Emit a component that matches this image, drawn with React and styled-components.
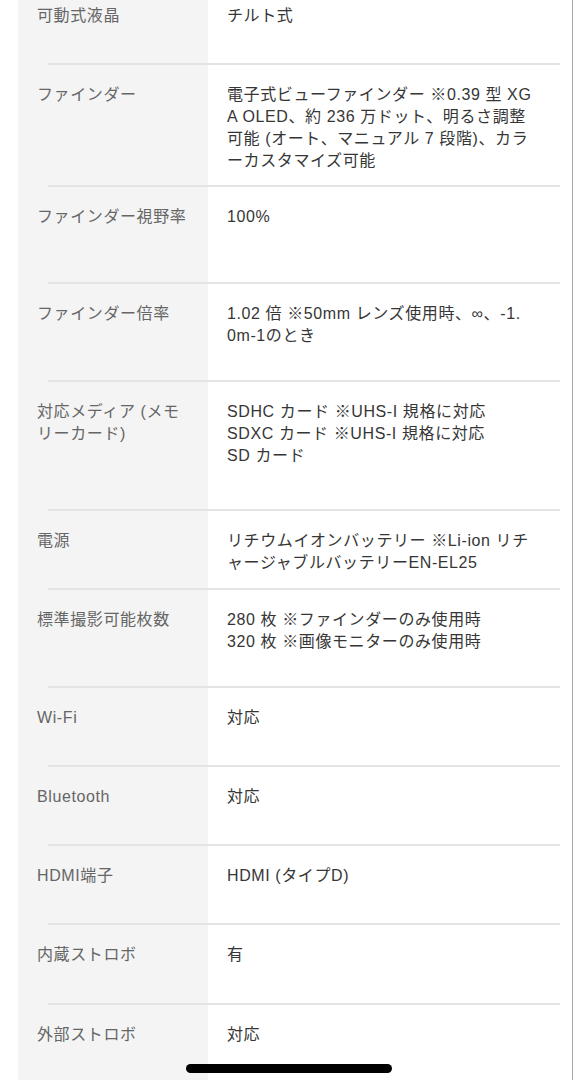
import React from 'react';
import styled, { createGlobalStyle } from 'styled-components';

const GRAY_COL = '#f4f4f4';
const DIVIDER = '#e4e4e4';

const GlobalStyle = createGlobalStyle`
	html, body {
		margin: 0;
		padding: 0;
		background: #fff;
		overflow: hidden;
	}
	body {
		font-family: 'Liberation Sans', 'Noto Sans CJK JP', sans-serif;
		-webkit-font-smoothing: antialiased;
	}
`;

const Page = styled.div`
	height: 1080px;
	overflow: hidden;
`;

const SpecList = styled.div`
	width: 555px;
	margin-left: 18px;
	margin-top: -14px;
	box-sizing: border-box;
	border-right: 1px solid #a8a8a8;
	/* left column stays gray through the dividers */
	background: linear-gradient(to right, ${GRAY_COL} 0, ${GRAY_COL} 190px, #fff 190px);
`;

const Row = styled.div`
	display: grid;
	grid-template-columns: 190px 1fr;
	height: ${(p) => p.$h}px;
	box-sizing: border-box;
	padding-top: 19px;
	font-size: 16px;
	line-height: 22px;
	letter-spacing: 0.6px;
`;

const Label = styled.div`
	padding-left: 19px;
	color: #666;
`;

const Value = styled.div`
	padding-left: 19px;
	color: #363636;
`;

const Line = styled.span`
	display: block;
	white-space: nowrap;
`;

const Divider = styled.div`
	height: 2px;
	margin: 0 12px 0 30px;
	background: ${DIVIDER};
`;

const HomeIndicator = styled.div`
	position: fixed;
	left: 186px;
	top: 1064px;
	width: 206px;
	height: 9px;
	border-radius: 5px;
	background: #000;
`;

const specs = [
	{ h: 77, label: ['可動式液晶'], value: ['チルト式'] },
	{
		h: 120,
		label: ['ファインダー'],
		value: [
			'電子式ビューファインダー ※0.39 型 XG',
			'A OLED、約 236 万ドット、明るさ調整',
			'可能 (オート、マニュアル 7 段階)、カラ',
			'ーカスタマイズ可能',
		],
	},
	{ h: 95, label: ['ファインダー視野率'], value: ['100%'] },
	{ h: 96, label: ['ファインダー倍率'], value: ['1.02 倍 ※50mm レンズ使用時、∞、-1.', '0m-1のとき'] },
	{
		h: 127,
		label: ['対応メディア (メモ', 'リーカード)'],
		value: ['SDHC カード ※UHS-I 規格に対応', 'SDXC カード ※UHS-I 規格に対応', 'SD カード'],
	},
	{ h: 77, label: ['電源'], value: ['リチウムイオンバッテリー ※Li-ion リチ', 'ャージャブルバッテリーEN-EL25'] },
	{ h: 96, label: ['標準撮影可能枚数'], value: ['280 枚 ※ファインダーのみ使用時', '320 枚 ※画像モニターのみ使用時'] },
	{ h: 77, label: ['Wi-Fi'], value: ['対応'] },
	{ h: 77, label: ['Bluetooth'], value: ['対応'] },
	{ h: 77, label: ['HDMI端子'], value: ['HDMI (タイプD)'] },
	{ h: 78, label: ['内蔵ストロボ'], value: ['有'] },
	{ h: 90, label: ['外部ストロボ'], value: ['対応'] },
];

const App = () => {
	return (
		<Page>
			<GlobalStyle />
			<SpecList>
				{specs.map((s, i) => (
					<React.Fragment key={i}>
						{i > 0 && <Divider />}
						<Row $h={s.h}>
							<Label>
								{s.label.map((l, j) => (
									<Line key={j}>{l}</Line>
								))}
							</Label>
							<Value>
								{s.value.map((v, j) => (
									<Line key={j}>{v}</Line>
								))}
							</Value>
						</Row>
					</React.Fragment>
				))}
			</SpecList>
			<HomeIndicator />
		</Page>
	);
};

export default App;
